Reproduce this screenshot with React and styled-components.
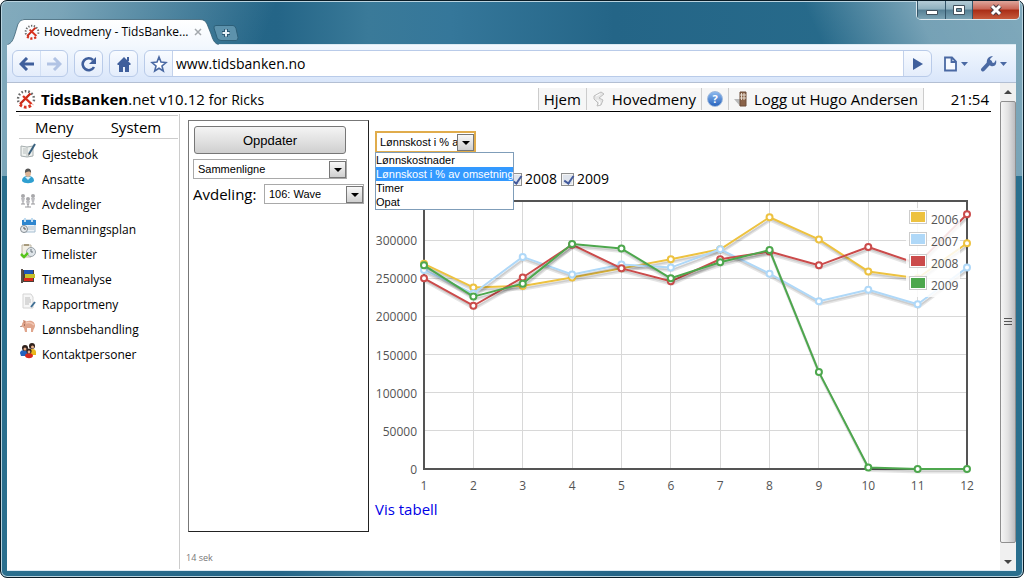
import React, { useState } from 'react'
import styled, { createGlobalStyle } from 'styled-components'


const menuItems = [
  { label: 'Gjestebok', icon: 'book' },
  { label: 'Ansatte', icon: 'user' },
  { label: 'Avdelinger', icon: 'org' },
  { label: 'Bemanningsplan', icon: 'calendar' },
  { label: 'Timelister', icon: 'timelist' },
  { label: 'Timeanalyse', icon: 'analysis' },
  { label: 'Rapportmeny', icon: 'report' },
  { label: 'Lønnsbehandling', icon: 'pig' },
  { label: 'Kontaktpersoner', icon: 'people' },
]

const measures = ['Lønnskostnader', 'Lønnskost i % av omsetning', 'Timer', 'Opat']

const series = [
  { year: '2006', color: '#edc240', values: [269000, 238000, 240000, 251000, 263000, 275000, 288000, 330000, 301000, 259000, 250000, 296000] },
  { year: '2007', color: '#afd8f8', values: [261000, 230000, 278000, 255000, 268000, 264000, 288000, 256000, 220000, 235000, 216000, 264000] },
  { year: '2008', color: '#cb4b4b', values: [250000, 214000, 251000, 294000, 263000, 246000, 275000, 285000, 267000, 291000, 269000, 334000] },
  { year: '2009', color: '#4da74d', values: [267000, 226000, 243000, 295000, 289000, 250000, 271000, 287000, 127000, 2000, 0, 0] },
]


const Logo = ({ size }) => (
  <svg width={size} height={size} viewBox="0 0 20 20" aria-hidden="true">
    <g fill="none" strokeWidth="2.4">
      <path d="M2.500 13A8 8 0 1 1 17.500 13" stroke="#666" strokeDasharray="1.6 1.9" />
      <path d="M4 15.500A8.200 8.200 0 0 0 16.500 15" stroke="#d8301c" strokeDasharray="2.6 2" strokeWidth="3" />
    </g>
    <path d="M14.500 4.500L4 15" stroke="#c92a18" strokeWidth="2.400" fill="none" />
    <path d="M7 7l8.500 8" stroke="#d8301c" strokeWidth="2.400" fill="none" />
  </svg>
)

const MenuIcon = ({ name }) => (
  <svg width="16" height="16" viewBox="0 0 16 16" aria-hidden="true">
    {name === 'book' && (
      <>
        <path d="M1 3l6 1 6-1v10l-6 1-6-1z" fill="#eef1ef" stroke="#a5adae" />
        <path d="M7 4v10M3 6h3M3 8h3M3 10h3" stroke="#b9bfbf" />
        <path d="M15 1L9 11" stroke="#39617f" strokeWidth="2" />
        <path d="M9 10l-1 3 2-2" fill="#333" />
      </>
    )}
    {name === 'user' && (
      <>
        <path d="M2 13c0-4 3-5 6-5s6 1 6 5c-2 3-10 3-12 0z" fill="#2f9fd0" />
        <path d="M5 9l3 3 3-3" fill="#d9eef7" />
        <ellipse cx="8" cy="5" rx="3" ry="4" fill="#ddb596" />
        <path d="M5 5c-1-6 7-6 6 0-1-2-3-2-6 0z" fill="#555" />
      </>
    )}
    {name === 'org' && (
      <g fill="#a8a8ab">
        <circle cx="3" cy="3" r="2" /><circle cx="8" cy="6" r="2" /><circle cx="13" cy="3" r="2" />
        <path d="M1 5h4l-1 4H2zM6 8h4l-1 4H7zM11 5h4l-1 4h-2z" fill="#bcbcc0" />
        <path d="M3 9v2M8 11v3M13 9v2M1 11h4M5 14h6M11 11h4" stroke="#97979b" />
      </g>
    )}
    {name === 'calendar' && (
      <>
        <path d="M3 2h12v12H3z" fill="#eef3f8" stroke="#a6bed1" />
        <path d="M2 2h14v5H2z" fill="#2e86cf" />
        <path d="M5 0v4M12 0v4" stroke="#bfdcf2" strokeWidth="2" />
        <path d="M8 9h6M8 11h6" stroke="#b0bfca" />
        <circle cx="4" cy="11" r="3.500" fill="#e8ebed" stroke="#868e94" />
        <path d="M4 9v2h2" stroke="#555" fill="none" />
      </>
    )}
    {name === 'timelist' && (
      <>
        <path d="M2 2h9v12H2z" fill="#f3efe4" stroke="#bfb7a5" />
        <path d="M4 1h5v2H4z" fill="#a79a7d" />
        <circle cx="11" cy="9" r="4.500" fill="#dfe5e9" stroke="#99a2a8" />
        <path d="M11 6v3h2" stroke="#68727a" fill="none" />
        <path d="M1 11l3 3 4-4" stroke="#56c51d" strokeWidth="2.500" fill="none" />
      </>
    )}
    {name === 'analysis' && (
      <>
        <path d="M3 2h11v12H3z" fill="#4b3e37" />
        <path d="M4 2h9v4H4z" fill="#1e55b5" />
        <path d="M5 6h10v4H5z" fill="#c5c12c" />
        <path d="M4 10h9v3H4z" fill="#d8281c" />
        <path d="M1 1h2v14H1z" fill="#5b504a" />
      </>
    )}
    {name === 'report' && (
      <>
        <path d="M3 1h8l2 3v11H3z" fill="#f6f6f6" stroke="#d4d4d4" />
        <path d="M5 5h5M5 7h6M5 9h6M5 11h4" stroke="#bbb" />
        <path d="M15 9l-4 5" stroke="#406f94" strokeWidth="2" />
      </>
    )}
    {name === 'pig' && (
      <>
        <path d="M2 7C2 3 5 4 8 3c5-1 7 2 7 5 0 2-2 3-2 6h-2v-4H7v4H5l-1-4-3-2z" fill="#e0a58c" />
        <path d="M3 2l3 1-2 3z" fill="#c88468" />
        <path d="M6 5c3-1 6 0 8 2" stroke="#f3c9b6" strokeWidth="1.500" fill="none" />
        <path d="M4 7h1M1 8v1" stroke="#70412f" />
      </>
    )}
    {name === 'people' && (
      <>
        <path d="M0 10c0-4 8-4 8 0v3H1z" fill="#2462bd" />
        <path d="M9 9c0-4 7-4 7 0v3h-6z" fill="#e9b71c" />
        <circle cx="5" cy="5" r="3" fill="#30211c" />
        <circle cx="12" cy="3" r="3" fill="#30211c" />
        <circle cx="12.500" cy="4" r="1.500" fill="#e8b08e" />
        <circle cx="5" cy="6" r="1.500" fill="#e8b08e" />
        <path d="M5 13c0-4 8-4 8 0-1 3-7 3-8 0z" fill="#d7281c" />
        <circle cx="9" cy="8" r="2.600" fill="#30211c" />
        <circle cx="9" cy="9" r="1.400" fill="#e8b08e" />
      </>
    )}
  </svg>
)

const Dropdown = ({ options, value, onChange, id, label, focused, width }) => (
  <SelectBox $width={width} $focused={focused}>
    <select id={id} aria-label={label} value={value} onChange={onChange}>
      {options.map((o) => <option key={o}>{o}</option>)}
    </select>
    <ArrowBox>
      <svg width="8" height="4" viewBox="0 0 8 4"><path d="M0 0h8L4 4z" fill="#000" /></svg>
    </ArrowBox>
  </SelectBox>
)


// plot area inside the svg
const left = 49
const top = 8
const plotW = 543
const plotH = 267
const px = (i) => left + (i * plotW) / 11
const py = (v) => top + plotH - (v * plotH) / 350000

const Chart = ({ visible }) => {
  const shown = series.filter((s) => visible.includes(s.year))
  const ticks = [0, 50000, 100000, 150000, 200000, 250000, 300000]

  return (
    <ChartSvg viewBox="0 0 606 304" role="img" aria-label="Lønnskost i % av omsetning">
      <g stroke="#d8d8d8" shapeRendering="crispEdges">
        {ticks.map((t) => <path key={t} d={`M${left} ${py(t)}H${left + plotW}`} />)}
        {series[0].values.map((v, i) => <path key={i} d={`M${px(i)} ${top}V${top + plotH}`} />)}
      </g>
      <rect x={left} y={top - 1} width={plotW} height={plotH + 1} fill="none" stroke="#545454" strokeWidth="2" />

      <g fill="none" strokeLinejoin="round">
        {shown.map((s) => {
          const points = s.values.map((v, i) => `${px(i)},${py(v)}`).join(' ')
          return (
            <g key={s.year}>
              <polyline points={points} stroke="#000" strokeOpacity="0.1" strokeWidth="3" transform="translate(1 3)" />
              <polyline points={points} stroke="#000" strokeOpacity="0.1" strokeWidth="2" transform="translate(1 2)" />
              <polyline points={points} stroke={s.color} strokeWidth="2" />
              {s.values.map((v, i) => (
                <circle key={i} cx={px(i)} cy={py(v)} r="3" fill="#fff" stroke={s.color} strokeWidth="2" />
              ))}
            </g>
          )
        })}
      </g>

      <rect x="531" y="14" width="54" height="89" fill="#fff" fillOpacity="0.85" />
      {series.map((s, i) => (
        <g key={s.year}>
          <rect x="534.5" y={16.5 + i * 22} width="17" height="13" fill="#fff" stroke="#ccc" />
          <rect x="536" y={18 + i * 22} width="14" height="10" fill={s.color} />
          <text x="556" y={30 + i * 22}>{s.year}</text>
        </g>
      ))}

      {ticks.map((t) => <text key={t} x="42" y={py(t) + 5} textAnchor="end">{t}</text>)}
      {series[0].values.map((v, i) => (
        <text key={i} x={px(i)} y="296" textAnchor="middle">{i + 1}</text>
      ))}
    </ChartSvg>
  )
}


const App = () => {
  const [measure, setMeasure] = useState(measures[1])
  const [years, setYears] = useState(['2006', '2007', '2008', '2009'])
  const [open, setOpen] = useState(true)

  // the open list lies over the first two years
  const yearChoices = open ? series.slice(2) : series

  const toggleYear = (year) => {
    setYears((prev) => (prev.includes(year) ? prev.filter((y) => y !== year) : [...prev, year]))
  }

  const pick = (m) => {
    setMeasure(m)
    setOpen(false)
  }

  return (
    <>
      <GlobalStyle />
      <Window>
        <TitleBar>
          <Tab>
            <svg width="212" height="26" viewBox="0 0 212 26" aria-hidden="true">
              <defs>
                <linearGradient id="tab" x1="0" y1="0" x2="0" y2="1">
                  <stop offset="0" stopColor="#fff" />
                  <stop offset="1" stopColor="#f3f8fe" />
                </linearGradient>
              </defs>
              <path d="M0 26C5 24 6 21 8 15L11 5Q13 0.500 17 0.500H193Q198 0.500 200 5L204 15C206 21 207 24 212 26" fill="url(#tab)" stroke="#2c5468" strokeOpacity="0.7" />
            </svg>
            <Logo size={16} />
            <TabTitle>Hovedmeny - TidsBanke...</TabTitle>
            <TabClose aria-label="Lukk fane">
              <svg width="8" height="8" viewBox="0 0 8 8"><path d="M1 1l6 6M7 1L1 7" stroke="#a3a8ad" strokeWidth="1.500" /></svg>
            </TabClose>
          </Tab>
          <NewTab aria-label="Ny fane">
            <svg width="26" height="16" viewBox="0 0 26 16">
              <path d="M3 0.500h17q2 0 3 3l2 9q0 3-2 3H8q-3 0-4-3L1 3Q0.500 0.500 3 0.500z" fill="#5d92ac" stroke="#2d5f78" />
              <path d="M13 4v8M9 8h8" stroke="#2b5873" strokeWidth="4" />
              <path d="M13 4.500v7M9.500 8h7" stroke="#e8f2f8" strokeWidth="2" />
            </svg>
          </NewTab>
          <WindowButtons>
            <WindowButton aria-label="Minimer" $width="28px">
              <svg width="14" height="12" viewBox="0 0 14 12"><path d="M1.500 6.500h11v4h-11z" fill="#fff" stroke="#42515d" /></svg>
            </WindowButton>
            <WindowButton aria-label="Maksimer" $width="27px">
              <svg width="12" height="12" viewBox="0 0 12 12">
                <path d="M0.500 1.500h11v9h-11z" fill="#fff" stroke="#42515d" />
                <path d="M3.500 4.500h5v3h-5z" fill="#6f98ab" stroke="#42515d" />
              </svg>
            </WindowButton>
            <WindowButton aria-label="Lukk" $width="47px" $close>
              <svg width="14" height="12" viewBox="0 0 14 12">
                <path d="M3 2l8 8M11 2l-8 8" stroke="#4a3a40" strokeWidth="5" />
                <path d="M3 2l8 8M11 2l-8 8" stroke="#fff" strokeWidth="3" />
              </svg>
            </WindowButton>
          </WindowButtons>
        </TitleBar>

        <Client>
          <Toolbar>
            <ButtonGroup>
              <ToolButton aria-label="Tilbake">
                <svg width="16" height="14" viewBox="0 0 16 14"><path d="M8 1L2 7l6 6M2 7h13" fill="none" stroke="#3f5f9c" strokeWidth="3" /></svg>
              </ToolButton>
              <ToolButton aria-label="Fremover" $divided>
                <svg width="16" height="14" viewBox="0 0 16 14"><path d="M8 1l6 6-6 6M14 7H1" fill="none" stroke="#b1c3e4" strokeWidth="3" /></svg>
              </ToolButton>
            </ButtonGroup>
            <ButtonGroup>
              <ToolButton aria-label="Last på nytt">
                <svg width="16" height="16" viewBox="0 0 16 16">
                  <path d="M13 11A6 6 0 1 1 12 4" fill="none" stroke="#3f5f9c" strokeWidth="2.600" />
                  <path d="M15 1v7H8z" fill="#3f5f9c" />
                </svg>
              </ToolButton>
            </ButtonGroup>
            <ButtonGroup>
              <ToolButton aria-label="Hjem">
                <svg width="16" height="16" viewBox="0 0 16 16">
                  <path d="M8 1l7 7-1 1h-1v7H9v-5H7v5H3V9H2L1 8z" fill="#3f5f9c" />
                  <path d="M11 1h2v4h-2z" fill="#3f5f9c" />
                </svg>
              </ToolButton>
            </ButtonGroup>
            <AddressBar>
              <ToolButton aria-label="Bokmerke">
                <svg width="18" height="18" viewBox="0 0 18 18"><path d="M9 2l2 5 5 .5-4 3.500 1.300 5L9 13.300 4.700 16 6 11 2 7.500 7 7z" fill="#fff" stroke="#4a69a3" strokeWidth="1.600" /></svg>
              </ToolButton>
              <input aria-label="Adresse" defaultValue="www.tidsbanken.no" />
              <ToolButton aria-label="Gå">
                <svg width="10" height="12" viewBox="0 0 10 12"><path d="M0 0l10 6-10 6z" fill="#3f5f9c" /></svg>
              </ToolButton>
            </AddressBar>
            <MenuButton aria-label="Side">
              <svg width="26" height="16" viewBox="0 0 26 16">
                <path d="M2 1.500h7l4 4v9H2zM8.500 2v4H13" fill="#f7faff" stroke="#4a69a3" strokeWidth="1.800" />
                <path d="M18 6h7l-3.500 4z" fill="#4a69a3" />
              </svg>
            </MenuButton>
            <MenuButton aria-label="Verktøy">
              <svg width="28" height="16" viewBox="0 0 28 16">
                <path d="M3 13.500L10 6" stroke="#4a69a3" strokeWidth="4" strokeLinecap="round" />
                <path d="M13 0L10 3l1 3 3 1 2-3c1 4-1 7-5 6L7 8C6 4 8 0 13 0z" fill="#4a69a3" />
                <path d="M20 6h7l-3.500 4z" fill="#4a69a3" />
              </svg>
            </MenuButton>
          </Toolbar>

          <Viewport>
            <Page>
              <Header>
                <Logo size={20} />
                <Brand><b>TidsBanken</b>.net v10.12 <small>for Ricks</small></Brand>
                <Nav>
                  <NavLink href="#hjem">Hjem</NavLink>
                  <NavLink href="#hovedmeny">
                    <svg width="14" height="18" viewBox="0 0 14 18" aria-hidden="true">
                      <path d="M2 6l7-4 3 2-5 4 4 2-2 5-4 1 1-3-4-4z" fill="#e6e6e6" stroke="#bdbdbd" />
                      <path d="M4 6l4-2M5 10l3 2-1 3" fill="none" stroke="#fff" />
                    </svg>
                    Hovedmeny
                  </NavLink>
                  <NavLink href="#hjelp" aria-label="Hjelp">
                    <HelpBadge>?</HelpBadge>
                  </NavLink>
                  <NavLink href="#loggut">
                    <svg width="14" height="16" viewBox="0 0 14 16" aria-hidden="true">
                      <path d="M0 8h6v7z" fill="#b9b9b9" />
                      <path d="M6 1h6v14H6z" fill="#8a6248" stroke="#6d4c38" />
                      <path d="M7.500 2v7M10 2v7M6 4h6M6 7h6" stroke="#e6dcd0" />
                    </svg>
                    Logg ut Hugo Andersen
                  </NavLink>
                </Nav>
                <Clock>21:54</Clock>
              </Header>

              <Columns>
                <Sidebar>
                  <SideHead><span>Meny</span><span>System</span></SideHead>
                  {menuItems.map((item) => (
                    <SideLink key={item.label} href={`#${item.icon}`}>
                      <MenuIcon name={item.icon} />
                      <span>{item.label}</span>
                    </SideLink>
                  ))}
                </Sidebar>

                <Main>
                  <Work>
                    <Panel>
                      <UpdateButton>Oppdater</UpdateButton>
                      <Dropdown options={['Sammenligne']} label="Rapport" width="154px" />
                      <Field>
                        <label htmlFor="avdeling">Avdeling:</label>
                        <Dropdown id="avdeling" options={['106: Wave']} width="100px" />
                      </Field>
                    </Panel>
                    <Report>
                      <Combo onClick={() => setOpen(true)}>
                        <Dropdown
                          options={measures}
                          value={measure}
                          onChange={(e) => setMeasure(e.target.value)}
                          label="Måltall"
                          width="101px"
                          focused
                        />
                      </Combo>
                      {open && (
                        <Popup role="listbox">
                          {measures.map((m) => (
                            <Option key={m} role="option" aria-selected={m === measure} $active={m === measure} onClick={() => pick(m)}>{m}</Option>
                          ))}
                        </Popup>
                      )}
                      <Years $open={open}>
                        {yearChoices.map((s) => (
                          <label key={s.year}>
                            <input type="checkbox" checked={years.includes(s.year)} onChange={() => toggleYear(s.year)} />
                            {s.year}
                          </label>
                        ))}
                      </Years>
                      <Chart visible={years} />
                      <TableLink href="#tabell">Vis tabell</TableLink>
                    </Report>
                  </Work>
                  <Timing>14 sek</Timing>
                </Main>
              </Columns>
            </Page>

            <Scrollbar>
              <ScrollButton aria-label="Opp">
                <svg width="8" height="4" viewBox="0 0 8 4"><path d="M0 4h8L4 0z" fill="#444" /></svg>
              </ScrollButton>
              <Thumb>
                <svg width="8" height="8" viewBox="0 0 8 8"><path d="M0 0.500h8M0 3.500h8M0 6.500h8" stroke="#555" /></svg>
              </Thumb>
              <ScrollButton aria-label="Ned" $tall>
                <svg width="8" height="4" viewBox="0 0 8 4"><path d="M0 0h8L4 4z" fill="#444" /></svg>
              </ScrollButton>
            </Scrollbar>
          </Viewport>
        </Client>
      </Window>
    </>
  )
}

export default App



const GlobalStyle = createGlobalStyle`
  * {
    box-sizing: border-box;
  }
  body {
    margin: 0;
    background: #fff;
    font-family: 'Open Sans', 'Noto Sans', sans-serif;
    color: #000;
  }
  button, input, select {
    font-family: inherit;
    margin: 0;
  }
  button {
    border: 0;
    padding: 0;
    background: none;
  }
  svg {
    display: block;
    flex-shrink: 0;
  }
`;

const Window = styled.div`
  min-height: 100vh;
  display: flex;
  flex-direction: column;
  padding: 0 7px 6px 6px;
  border: 1px solid #0a1c26;
  border-radius: 7px;
  background:
    linear-gradient(110deg, rgba(255, 255, 255, 0.42) 0, rgba(255, 255, 255, 0.38) 60px, rgba(255, 255, 255, 0) 260px) no-repeat 0 0 / 100% 175px,
    linear-gradient(245deg, rgba(255, 255, 255, 0.4) 0, rgba(255, 255, 255, 0.36) 100px, rgba(255, 255, 255, 0) 200px) no-repeat 0 0 / 100% 175px,
    linear-gradient(90deg, #2a6f8e, #246587 27%, #3a7a99 36%, #35779a 44%, #246587 60%, #2a6f8e);
  box-shadow: inset 0 0 0 1px #b9d3df;
`;

const TitleBar = styled.div`
  display: flex;
  align-items: flex-end;
  height: 43px;
`;

const Tab = styled.div`
  position: relative;
  z-index: 0;
  display: flex;
  align-items: center;
  width: 204px;
  height: 25px;
  padding-left: 17px;
  gap: 4px;

  > svg:first-child {
    position: absolute;
    left: 0;
    top: 0;
    z-index: -1;
  }
`;

const TabTitle = styled.span`
  flex: 1;
  min-width: 0;
  font-size: 12px;
  line-height: 16px;
  white-space: nowrap;
`;

const TabClose = styled.button`
  padding: 4px 9px 4px 2px;
`;

const NewTab = styled.button`
  align-self: flex-end;
  padding: 0 0 3px 2px;
`;

const WindowButtons = styled.div`
  display: flex;
  align-self: flex-start;
  margin: 0 -4px 0 auto;
  border: 1px solid #dce8ee;
  border-top: 0;
  border-radius: 0 0 5px 5px;
  overflow: hidden;
`;

const WindowButton = styled.button`
  display: flex;
  align-items: center;
  justify-content: center;
  width: ${({ $width }) => $width};
  height: 18px;
  border-left: 1px solid #35566a;
  background: ${({ $close }) => ($close
    ? 'linear-gradient(#dfa69b, #c96656 45%, #a92c15 50%, #c65a3c)'
    : 'linear-gradient(#b4ccd6, #8fb0be 45%, #557f94 50%, #7ba3b4)')};
`;

const Client = styled.div`
  flex: 1;
  display: flex;
  flex-direction: column;
  border: 1px solid #dbe9f2;
  border-width: 1px 0;
  background: #fff;
`;

const Toolbar = styled.div`
  display: flex;
  align-items: center;
  gap: 6px;
  height: 38px;
  padding: 0 8px 0 5px;
  background: linear-gradient(#f3f8fe, #d9e6fa);
  border-bottom: 1px solid #b3bfd3;
`;

const ButtonGroup = styled.div`
  display: flex;
  border: 1px solid #b9cbe9;
  border-radius: 6px;
  background: linear-gradient(#f8fbff, #e4edfb);
`;

const ToolButton = styled.button`
  display: flex;
  align-items: center;
  justify-content: center;
  width: 27px;
  height: 25px;
  border-left: ${({ $divided }) => ($divided ? '1px solid #d3e0f4' : '0')};
`;

const AddressBar = styled(ButtonGroup)`
  flex: 1;

  input {
    flex: 1;
    min-width: 0;
    height: 25px;
    padding: 0 3px;
    border: 1px solid #c3d2eb;
    border-width: 0 1px;
    background: #fff;
    font-size: 14px;
    outline: none;
  }
`;

const MenuButton = styled.button`
  padding-left: 5px;
`;

const Viewport = styled.div`
  flex: 1;
  display: flex;
`;

const Page = styled.div`
  flex: 1;
  min-width: 0;
  display: flex;
  flex-direction: column;
  padding: 4px 9px 1px;
`;

const Header = styled.header`
  display: flex;
  align-items: center;
  height: 25px;
  border-bottom: 1px solid #000;
  font-size: 15px;
  line-height: 22px;
`;

const Brand = styled.div`
  margin-left: 5px;
  white-space: nowrap;

  small {
    font-size: 14px;
  }
`;

const Nav = styled.nav`
  display: flex;
  margin-left: auto;
  border-left: 1px solid #ccc;
`;

const NavLink = styled.a`
  display: flex;
  align-items: center;
  gap: 6px;
  height: 22px;
  padding: 0 5px;
  border-right: 1px solid #ccc;
  background: #f6f6f6;
  color: #000;
  text-decoration: none;
  white-space: nowrap;
`;

const HelpBadge = styled.span`
  width: 16px;
  height: 16px;
  border: 1px solid #9db8dc;
  border-radius: 50%;
  background: linear-gradient(#8db9ee, #2763bd);
  color: #fff;
  font-size: 11px;
  font-weight: 700;
  line-height: 14px;
  text-align: center;
`;

const Clock = styled.div`
  width: 67px;
  padding-right: 2px;
  text-align: right;
`;

const Columns = styled.div`
  flex: 1;
  display: flex;
  padding-top: 2px;
`;

const Sidebar = styled.aside`
  width: 164px;
  padding: 1px 1px 0 3px;
  border-right: 1px solid #ccc;
`;

const SideHead = styled.div`
  display: flex;
  gap: 37px;
  height: 24px;
  padding-left: 16px;
  margin-bottom: 4px;
  border: 1px solid #ccc;
  border-width: 1px 0;
  font-size: 15px;
  line-height: 22px;
`;

const SideLink = styled.a`
  display: flex;
  gap: 6px;
  height: 25px;
  padding-left: 1px;
  color: #000;
  font-size: 12px;
  line-height: 24px;
  text-decoration: none;
`;

const Main = styled.main`
  flex: 1;
  min-width: 0;
  padding: 6px 0 0 8px;
`;

const Work = styled.div`
  display: flex;
  gap: 6px;
`;

const Panel = styled.section`
  display: flex;
  flex-direction: column;
  align-items: flex-start;
  gap: 5px;
  width: 181px;
  min-height: 412px;
  padding: 5px 4px;
  border: 1px solid #222;
  border-color: #777 #222 #222 #777;
`;

const UpdateButton = styled.button`
  width: 152px;
  height: 28px;
  margin-left: 1px;
  border: 1px solid #777;
  border-radius: 3px;
  background: linear-gradient(#f4f4f4, #e2e2e2 50%, #cfcfcf);
  font: 13px 'Liberation Sans', Arial, sans-serif;
`;

const Field = styled.div`
  display: flex;
  align-items: center;
  gap: 4px;
  height: 20px;
  font-size: 15px;

  label {
    width: 67px;
    white-space: nowrap;
  }
`;

const SelectBox = styled.div`
  position: relative;
  width: ${({ $width }) => $width};
  border: ${({ $focused }) => ($focused ? '2px solid #e0ac4c' : '1px solid #a9a9a9')};
  background: #fff;

  select {
    display: block;
    width: 100%;
    height: 18px;
    padding: 0 17px 0 ${({ $focused }) => ($focused ? '3px' : '4px')};
    border: 0;
    outline: none;
    appearance: none;
    background: transparent;
    color: #000;
    font: 11px 'Liberation Sans', Arial, sans-serif;
  }
`;

const ArrowBox = styled.span`
  position: absolute;
  top: 1px;
  right: 0;
  bottom: 0;
  display: flex;
  align-items: center;
  justify-content: center;
  width: 17px;
  border: 1px solid #777;
  background: linear-gradient(#f8f8f8, #cfcfcf);
  pointer-events: none;
`;

const Report = styled.section`
  position: relative;
  flex: 1;
  min-width: 0;
  padding-top: 11px;
`;

const Combo = styled.div`
  display: flex;
`;

const Popup = styled.ul`
  position: absolute;
  top: 32px;
  left: 0;
  z-index: 1;
  width: 139px;
  margin: 0;
  padding: 0;
  border: 1px solid #7f9db9;
  background: #fff;
  list-style: none;
`;

const Option = styled.li`
  height: 14px;
  background: ${({ $active }) => ($active ? '#3399ff' : '#fff')};
  color: ${({ $active }) => ($active ? '#fff' : '#000')};
  font: 11px/14px 'Liberation Sans', Arial, sans-serif;
  white-space: nowrap;
`;

const Years = styled.div`
  display: flex;
  gap: 4px;
  height: 20px;
  margin: 16px 0 5px;
  padding-left: ${({ $open }) => ($open ? '134px' : '30px')};
  font-size: 14px;
  line-height: 20px;

  label {
    display: flex;
    align-items: center;
    gap: 3px;
    width: 48px;
  }

  input {
    flex-shrink: 0;
    appearance: none;
    width: 13px;
    height: 13px;
    border: 1px solid #8e8f8f;
    background: #dfe4ec;
    box-shadow: inset 0 0 0 1px #f4f4f4;
  }

  input:checked::after {
    content: '';
    display: block;
    width: 4px;
    height: 8px;
    margin: 0 0 0 4px;
    border: solid #42599b;
    border-width: 0 2px 2px 0;
    transform: rotate(35deg);
  }
`;

const ChartSvg = styled.svg`
  width: 100%;
  max-width: 606px;

  text {
    fill: #545454;
    font-size: 12px;
  }
`;

const TableLink = styled.a`
  color: #0000e6;
  font-size: 15px;
  line-height: 22px;
  text-decoration: none;
`;

const Timing = styled.div`
  margin: 20px 0 0 -2px;
  color: #777;
  font-size: 9px;
  line-height: 12px;
`;

const Scrollbar = styled.div`
  display: flex;
  flex-direction: column;
  width: 16px;
  background: #f0f0f0;
`;

const ScrollButton = styled.button`
  display: flex;
  align-items: center;
  justify-content: center;
  height: ${({ $tall }) => ($tall ? '27px' : '18px')};
  padding: ${({ $tall }) => ($tall ? '10px' : '0')} 0 0;
`;

const Thumb = styled.div`
  flex: 1;
  display: flex;
  align-items: center;
  justify-content: center;
  border: 1px solid #8f8f8f;
  border-radius: 2px;
  background: linear-gradient(90deg, #f5f5f5, #e2e2e2 50%, #bcbcc0);
`;
